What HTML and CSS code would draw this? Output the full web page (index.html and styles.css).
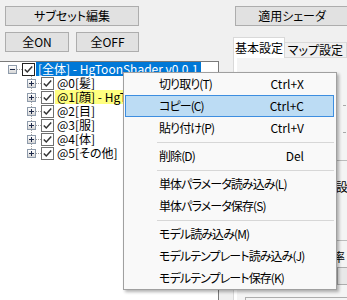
FILE: index.html
```html
<!DOCTYPE html>
<html lang="ja">
<head>
    <meta charset="UTF-8">
    <meta name="viewport" content="width=device-width, initial-scale=1.0">
    <title>サブセット編集</title>
    <link rel="stylesheet" href="styles.css">
</head>
<body>
<div class="window">
    <div class="left-pane">
        <button class="btn btn-wide">サブセット編集</button>
        <div class="btn-row">
            <button class="btn btn-on">全ON</button>
            <button class="btn btn-off">全OFF</button>
        </div>
        <div class="tree">
            <div class="node root">
                <span class="expander"><span class="box minus"></span></span>
                <svg class="check" width="13" height="13" viewBox="0 0 13 13"><rect x="0.5" y="0.5" width="12" height="12" fill="#fff" stroke="#222"/><path d="M2.8 6.4 L5.3 9 L10.2 3.6" fill="none" stroke="#333" stroke-width="1.5"/></svg>
                <span class="label selected">[全体] - HgToonShader v0.0.1</span>
            </div>
            <div class="node child">
                <span class="expander"><span class="box plus"></span></span>
                <svg class="check" width="13" height="13" viewBox="0 0 13 13"><rect x="0.5" y="0.5" width="12" height="12" fill="#fff" stroke="#707070"/><path d="M2.8 6.4 L5.3 9 L10.2 3.6" fill="none" stroke="#333" stroke-width="1.5"/></svg>
                <span class="label">@0[髪]</span>
            </div>
            <div class="node child">
                <span class="expander"><span class="box plus"></span></span>
                <svg class="check" width="13" height="13" viewBox="0 0 13 13"><rect x="0.5" y="0.5" width="12" height="12" fill="#fff" stroke="#707070"/><path d="M2.8 6.4 L5.3 9 L10.2 3.6" fill="none" stroke="#333" stroke-width="1.5"/></svg>
                <span class="label marked">@1[顔] - HgToonShader</span>
            </div>
            <div class="node child">
                <span class="expander"><span class="box plus"></span></span>
                <svg class="check" width="13" height="13" viewBox="0 0 13 13"><rect x="0.5" y="0.5" width="12" height="12" fill="#fff" stroke="#707070"/><path d="M2.8 6.4 L5.3 9 L10.2 3.6" fill="none" stroke="#333" stroke-width="1.5"/></svg>
                <span class="label">@2[目]</span>
            </div>
            <div class="node child">
                <span class="expander"><span class="box plus"></span></span>
                <svg class="check" width="13" height="13" viewBox="0 0 13 13"><rect x="0.5" y="0.5" width="12" height="12" fill="#fff" stroke="#707070"/><path d="M2.8 6.4 L5.3 9 L10.2 3.6" fill="none" stroke="#333" stroke-width="1.5"/></svg>
                <span class="label">@3[服]</span>
            </div>
            <div class="node child">
                <span class="expander"><span class="box plus"></span></span>
                <svg class="check" width="13" height="13" viewBox="0 0 13 13"><rect x="0.5" y="0.5" width="12" height="12" fill="#fff" stroke="#707070"/><path d="M2.8 6.4 L5.3 9 L10.2 3.6" fill="none" stroke="#333" stroke-width="1.5"/></svg>
                <span class="label">@4[体]</span>
            </div>
            <div class="node child last">
                <span class="expander"><span class="box plus"></span></span>
                <svg class="check" width="13" height="13" viewBox="0 0 13 13"><rect x="0.5" y="0.5" width="12" height="12" fill="#fff" stroke="#707070"/><path d="M2.8 6.4 L5.3 9 L10.2 3.6" fill="none" stroke="#333" stroke-width="1.5"/></svg>
                <span class="label">@5[その他]</span>
            </div>
        </div>
    </div>
    <div class="right-pane">
        <button class="btn btn-apply">適用シェーダ</button>
        <div class="tabs">
            <div class="tab active">基本設定</div>
            <div class="tab">マップ設定</div>
        </div>
        <div class="tab-page">
            <div class="page-inner">
                <div class="tick first"></div>
                <div class="tick"></div>
                <div class="rule first-rule"></div>
                <div class="caption caption-top">陰影設定</div>
                <div class="rule second-rule"></div>
                <div class="caption caption-rate">倍率</div>
                <div class="field"></div>
                <div class="bottom-box"></div>
            </div>
        </div>
    </div>
</div>

<div class="menu">
    <div class="item"><span>切り取り(T)</span><span class="key">Ctrl+X</span></div>
    <div class="item active"><span>コピー(C)</span><span class="key">Ctrl+C</span></div>
    <div class="item"><span>貼り付け(P)</span><span class="key">Ctrl+V</span></div>
    <div class="sep"></div>
    <div class="item"><span>削除(D)</span><span class="key">Del</span></div>
    <div class="sep"></div>
    <div class="item"><span>単体パラメータ読み込み(L)</span></div>
    <div class="item"><span>単体パラメータ保存(S)</span></div>
    <div class="sep"></div>
    <div class="item"><span>モデル読み込み(M)</span></div>
    <div class="item"><span>モデルテンプレート読み込み(J)</span></div>
    <div class="item"><span>モデルテンプレート保存(K)</span></div>
</div>
</body>
</html>
```

FILE: styles.css
```css
body {
    margin: 0;
    width: 347px;
    height: 300px;
    overflow: hidden;
    position: relative;
    background-color: #f0f0f0;
    font-family: "Noto Sans CJK JP", "Noto Sans", sans-serif;
    font-size: 12px;
    font-feature-settings: "palt";
    color: #000;
}

.window {
    display: flex;
    height: 300px;
}

/* left side: buttons + tree */
.left-pane {
    width: 219px;
    flex: none;
    display: flex;
    flex-direction: column;
}

.btn {
    font: inherit;
    font-feature-settings: "palt";
    color: #000;
    background-color: #e1e1e1;
    border: 1px solid #adadad;
    box-sizing: border-box;
    height: 20px;
    padding: 0;
    line-height: 18px;
}

.btn-wide {
    width: 134px;
    margin: 6px 0 0 5px;
}

.btn-row {
    display: flex;
    gap: 7px;
    margin: 6px 0 0 5px;
}

.btn-on {
    width: 64px;
}

.btn-off {
    width: 63px;
}

.tree {
    flex: 1;
    margin-top: 9px;
    background-color: #fff;
    border-top: 1px solid #7a7a7a;
    border-right: 1px solid #7a7a7a;
}

.node {
    display: flex;
    align-items: center;
    height: 14px;
}

.root {
    padding-left: 3px;
}

.child {
    padding-left: 22px;
}

.expander {
    width: 19px;
    height: 14px;
    flex: none;
    display: flex;
    justify-content: center;
    align-items: flex-start;
    background-repeat: no-repeat;
}

.root .expander {
    background-image: repeating-linear-gradient(to right, #a0a0a0 0 1px, transparent 1px 2px);
    background-position: 10px 7px;
    background-size: 9px 1px;
}

.child .expander {
    background-image:
        repeating-linear-gradient(to right, #a0a0a0 0 1px, transparent 1px 2px),
        repeating-linear-gradient(to bottom, #a0a0a0 0 1px, transparent 1px 2px);
    background-position: 10px 7px, 9px 0;
    background-size: 9px 1px, 1px 14px;
}

.child.last .expander {
    background-size: 9px 1px, 1px 8px;
}

.box {
    width: 9px;
    height: 9px;
    margin-top: 3px;
    box-sizing: border-box;
    border: 1px solid #8e9bab;
    background-repeat: no-repeat;
}

.minus {
    background-image:
        linear-gradient(#1e2a4a, #1e2a4a),
        linear-gradient(#ffffff, #d6d6d6);
    background-position: center, 0 0;
    background-size: 5px 1px, 100% 100%;
}

.plus {
    background-image:
        linear-gradient(#1e2a4a, #1e2a4a),
        linear-gradient(#1e2a4a, #1e2a4a),
        linear-gradient(#ffffff, #d6d6d6);
    background-position: center, center, 0 0;
    background-size: 5px 1px, 1px 5px, 100% 100%;
}

.check {
    flex: none;
    margin-right: 1px;
}

.label {
    height: 14px;
    line-height: 14px;
    padding: 0 2px;
    white-space: nowrap;
}

.selected {
    background-color: #0078d7;
    color: #fff;
}

.marked {
    background-color: #ffff80;
}

/* right side: apply button + tab control */
.right-pane {
    flex: 1;
    padding-left: 14px;
    display: flex;
    flex-direction: column;
    min-width: 0;
}

.btn-apply {
    flex: none;
    width: 114px;
    margin: 6px 0 0 2px;
}

.tabs {
    display: flex;
    align-items: flex-end;
    height: 20px;
    margin-top: 11px;
    white-space: nowrap;
}

.tab {
    height: 15px;
    line-height: 14px;
    padding: 0 3px 0 3px;
    margin-left: -1px;
    box-sizing: border-box;
    border: 1px solid #d9d9d9;
    border-bottom: none;
    background-color: #f0f0f0;
}

.tab.active {
    position: relative;
    z-index: 1;
    width: 64px;
    height: 21px;
    line-height: 19px;
    margin: 0 0 -1px 0;
    padding: 0;
    text-align: center;
    background-color: #fff;
}

.tab-page {
    flex: 1;
    border: 1px solid #d9d9d9;
    background-color: #fff;
    padding: 0 0 0 3px;
    display: flex;
    width: 200px;
}

.page-inner {
    flex: 1;
    display: flex;
    flex-direction: column;
    background-color: #f4f4f4;
}

.tick {
    width: 3px;
    height: 1px;
    margin: 26px 0 0 106px;
    background-color: #a8a8a8;
}

.tick.first {
    margin-top: 47px;
}

.rule {
    height: 1px;
    background-color: #bcbcbc;
}

.first-rule {
    margin-top: 27px;
}

.second-rule {
    margin-top: 46px;
}

.caption {
    height: 14px;
    line-height: 14px;
    white-space: nowrap;
}

.caption-top {
    margin: 19px 0 0 75px;
}

.caption-rate {
    margin: 9px 0 0 84px;
}

.field {
    width: 30px;
    height: 18px;
    margin: 3px 0 0 100px;
    box-sizing: border-box;
    border: 1px solid #adadad;
    background-color: #e8e8e8;
}

.bottom-box {
    height: 10px;
    margin: 12px 0 0 8px;
    border-top: 1px solid #adadad;
    border-left: 1px solid #adadad;
}

/* context menu */
.menu {
    position: absolute;
    left: 123px;
    top: 72px;
    width: 214px;
    box-sizing: border-box;
    border: 1px solid #a0a0a0;
    background-color: #f9f9f9;
    box-shadow: 2px 2px 3px rgba(0, 0, 0, 0.3);
    z-index: 5;
}

.item {
    display: flex;
    justify-content: space-between;
    height: 22px;
    line-height: 20px;
    margin: 0 2px 0 1px;
    padding: 0 29px 0 33px;
    box-sizing: border-box;
    border: 1px solid transparent;
    white-space: nowrap;
    letter-spacing: -0.9px;
}

.item .key {
    letter-spacing: 0;
}

.item.active {
    background-color: #bcdcf4;
    border-color: #3d8ee0;
}

.sep {
    height: 6px;
    margin: 0 2px 0 33px;
    background: linear-gradient(#d7d7d7, #d7d7d7) 0 3px / 100% 1px no-repeat;
}
```
